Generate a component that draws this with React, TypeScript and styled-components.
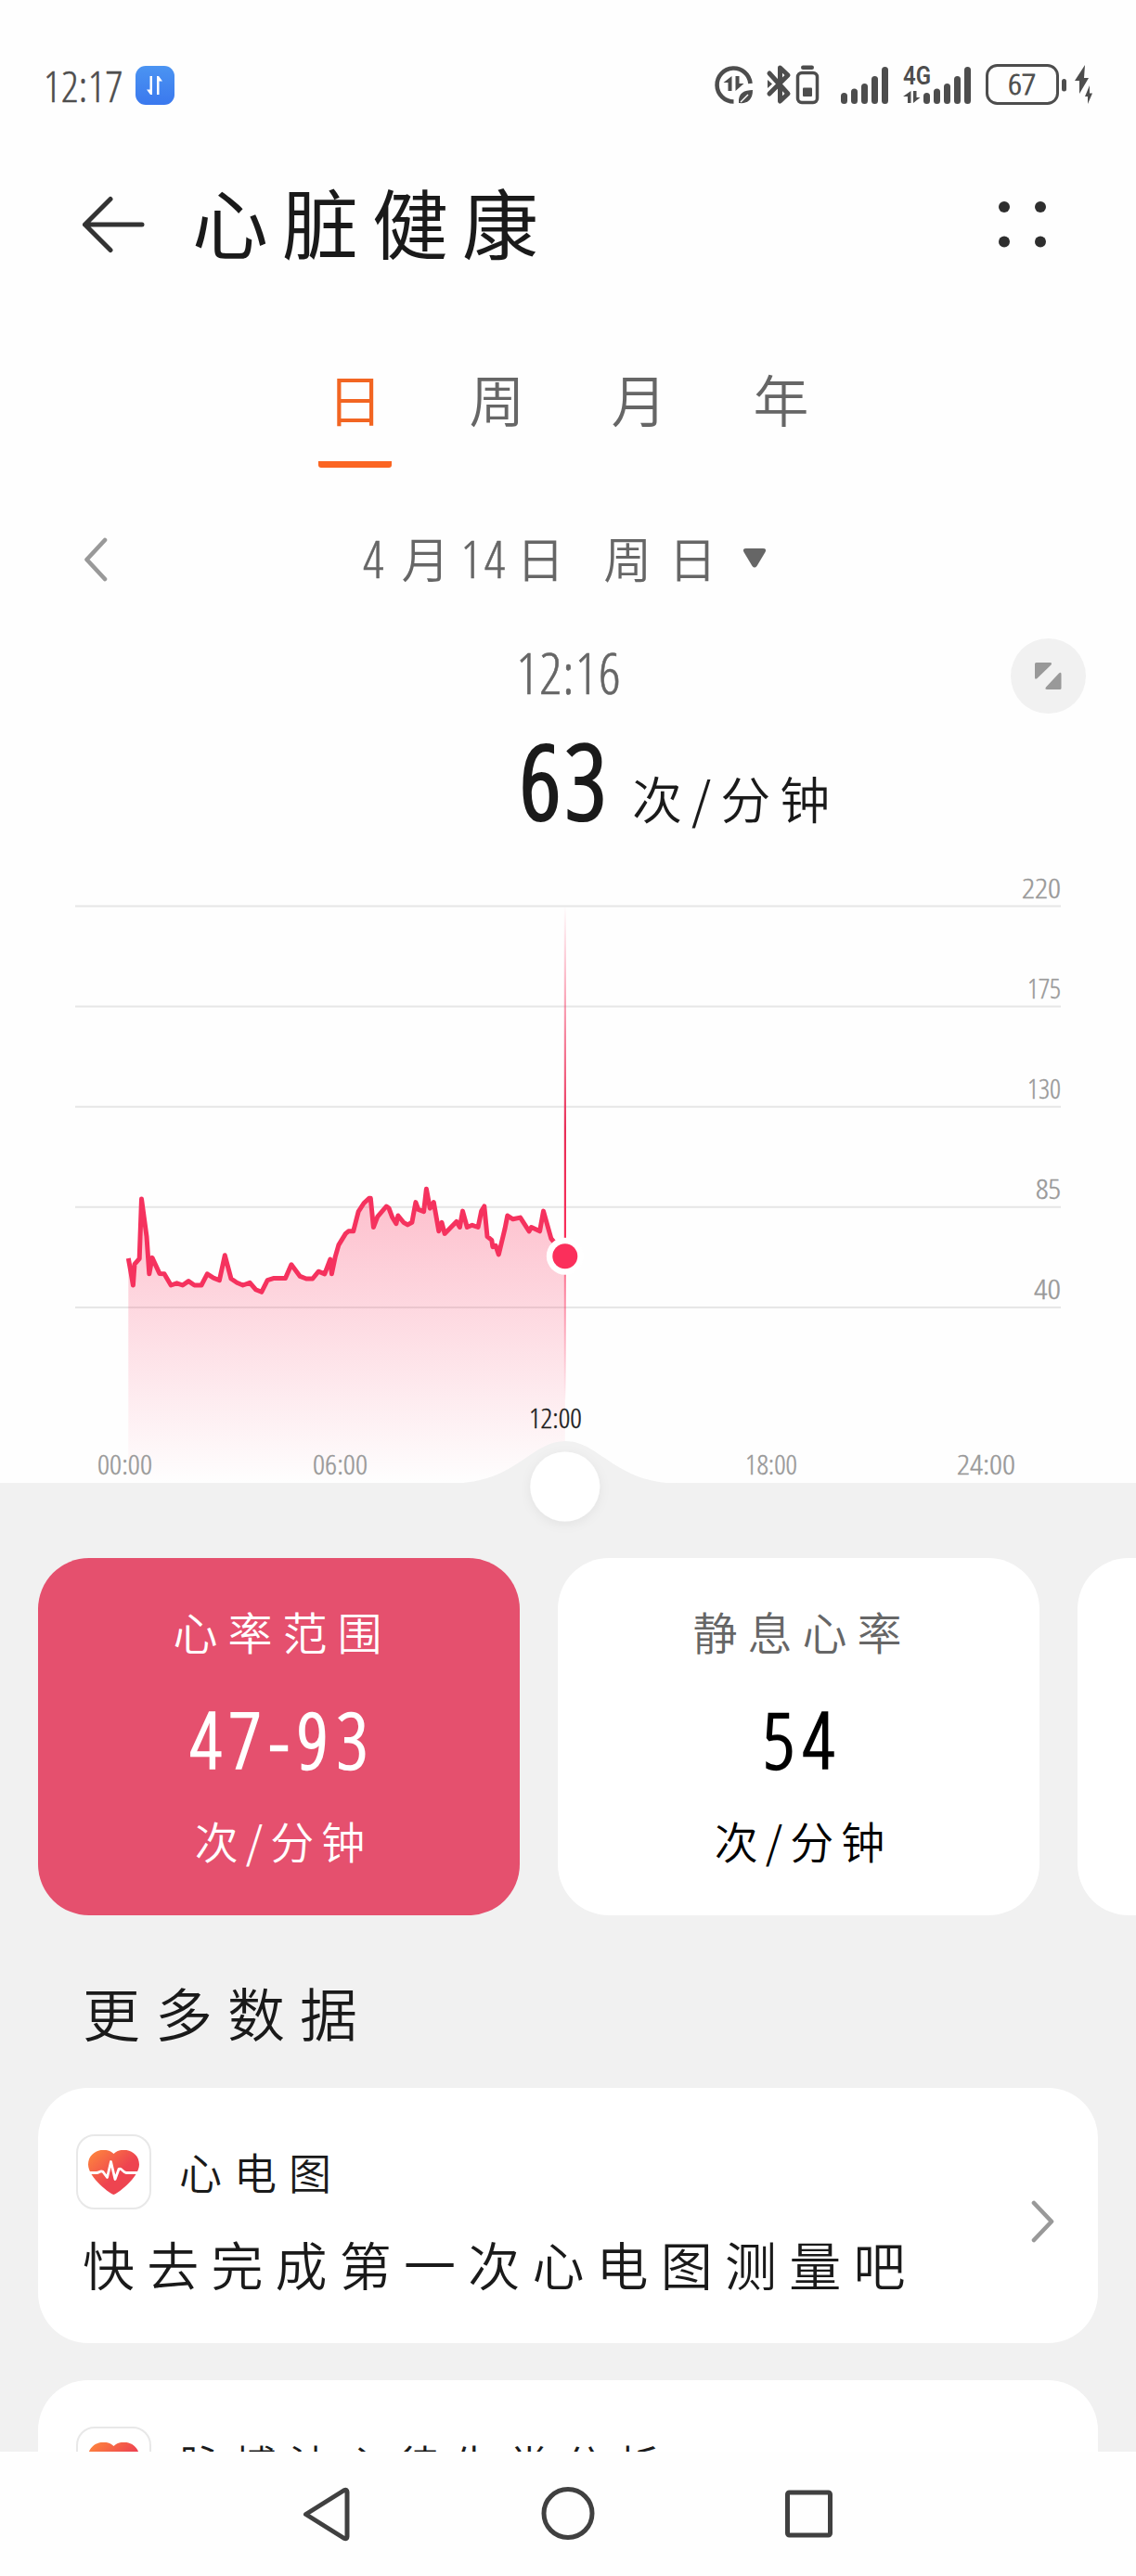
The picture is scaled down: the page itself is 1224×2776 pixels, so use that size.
import React from "react";
import styled, { createGlobalStyle } from "styled-components";

const CJK = `"Noto Sans CJK SC", sans-serif`;
const NUM = `"Open Sans Condensed Light", "Roboto Condensed", Roboto, "Noto Sans CJK SC", sans-serif`;

const GlobalStyle = createGlobalStyle`
  * { box-sizing: border-box; }
  body { margin: 0; background: #fefefe; font-family: ${CJK}; font-weight: 350; color: #1a1a1a; }
`;

const Screen = styled.div`
  width: 1224px;
  height: 2776px;
  overflow: hidden;
  display: flex;
  flex-direction: column;
  background: #fefefe;
`;

const StatusBar = styled.div`
  height: 184px;
  flex: none;
  padding: 0 46px 0 47px;
  display: flex;
  align-items: center;
  justify-content: space-between;
`;

const StatusLeft = styled.div`
  display: flex;
  align-items: center;
  gap: 13px;
`;

const Num = styled.span<{ $size: number; $track?: number; $color?: string; $stroke?: number; $lift?: number }>`
  font-family: ${NUM};
  font-stretch: 75%;
  font-size: ${(p) => p.$size}px;
  letter-spacing: ${(p) => p.$track ?? 0}px;
  color: ${(p) => p.$color ?? "inherit"};
  font-weight: 300;
  -webkit-text-stroke: ${(p) => p.$stroke ?? 0.6}px currentColor;
  line-height: 1;
  margin-bottom: ${(p) => p.$lift ?? 0}px;
  white-space: nowrap;
`;

const StatusIcons = styled.svg`
  width: 410px;
  height: 48px;
  overflow: visible;
`;

const Header = styled.header`
  height: 116px;
  flex: none;
  padding: 0 97px 0 88px;
  display: flex;
  align-items: center;
`;

const Title = styled.h1`
  margin: -8px 0 0 51px;
  flex: 1;
  font-size: 82px;
  font-weight: 400;
  line-height: 116px;
  letter-spacing: 15px;
`;

const Tabs = styled.nav`
  margin-top: 66px;
  height: 138px;
  flex: none;
  display: flex;
  justify-content: center;
  gap: 74px;
`;

const Tab = styled.div<{ $active?: boolean }>`
  width: 79px;
  height: 138px;
  text-align: center;
  font-size: 60px;
  line-height: 126px;
  color: ${(p) => (p.$active ? "#f26522" : "#666")};
  border-bottom: 7px solid ${(p) => (p.$active ? "#fb6522" : "transparent")};
  border-radius: 3px;
`;

const DateRow = styled.div`
  margin-top: 59px;
  height: 80px;
  flex: none;
  padding: 0 90px;
  display: grid;
  grid-template-columns: 26px 1fr 26px;
  align-items: center;
`;

const DateLabel = styled.div`
  display: flex;
  align-items: baseline;
  justify-content: flex-start;
  margin-top: -4px;
  padding-left: 275px;
  font-size: 52px;
  line-height: 76px;
  color: #666;

  svg { align-self: center; }
`;

const Cjk = styled.span<{ $gap: number; $before: number; $after: number }>`
  letter-spacing: ${(p) => p.$gap}px;
  margin-left: ${(p) => p.$before}px;
  margin-right: ${(p) => p.$after - p.$gap}px;
`;

const TimeRow = styled.div`
  margin-top: 45px;
  height: 80px;
  flex: none;
  padding: 0 54px 0 137px;
  display: grid;
  grid-template-columns: 1fr 81px;
  align-items: center;
  text-align: center;
`;

const Reading = styled.div`
  height: 152px;
  flex: none;
  padding: 17px 0 0 560px;
  display: flex;
  align-items: baseline;
  gap: 23px;
`;

const Unit = styled.span<{ $size: number; $track: number }>`
  font-size: ${(p) => p.$size}px;
  letter-spacing: ${(p) => p.$track}px;
  white-space: nowrap;
`;

const Chart = styled.svg`
  display: block;
  flex: none;
  width: 1224px;
  height: 678px;
  overflow: visible;
  position: relative;
  z-index: 1;
  font-family: ${NUM};
  font-weight: 300;
  font-stretch: 75%;
`;

const Lower = styled.main`
  height: 1044px;
  flex: none;
  overflow: hidden;
  background: #f1f1f1;
  padding: 81px 41px 0;
`;

const Stats = styled.div`
  display: flex;
  gap: 41px;
`;

const StatCard = styled.section<{ $active?: boolean }>`
  flex: none;
  width: 519px;
  height: 385px;
  border-radius: 55px;
  display: flex;
  flex-direction: column;
  align-items: center;
  background: ${(p) => (p.$active ? "#e5506e" : "#fff")};
  color: ${(p) => (p.$active ? "#fff" : "#000")};
`;

const StatName = styled.div<{ $active?: boolean }>`
  margin-top: 46px;
  height: 64px;
  font-size: 48px;
  line-height: 64px;
  letter-spacing: 11px;
  padding-left: 8px;
  color: ${(p) => (p.$active ? "#fff" : "#666")};
`;

const StatValue = styled.div`
  height: 110px;
  margin-top: 30px;
  padding-left: 9px;
  display: flex;
  align-items: center;
`;

const StatUnit = styled.div`
  margin-top: 19px;
  line-height: 70px;
  padding-left: 10px;
`;

const SectionTitle = styled.h2`
  margin: 59px 0 0 48px;
  height: 93px;
  font-size: 62px;
  font-weight: 350;
  line-height: 90px;
  letter-spacing: 16px;
`;

const DataCard = styled.section`
  height: 275px;
  margin: 34px 0 40px;
  border-radius: 54px;
  background: #fff;
  padding: 50px 47px 0 41px;
  display: grid;
  grid-template-columns: 1fr 26px;

  & + & {
    margin-top: 0;
  }
`;

const CardHead = styled.div`
  display: flex;
  align-items: center;
  gap: 30px;
  height: 81px;
`;

const IconBox = styled.div`
  width: 81px;
  height: 81px;
  border: 2px solid #e8e8e8;
  border-radius: 20px;
  display: flex;
  align-items: center;
  justify-content: center;
`;

const CardName = styled.div`
  margin-top: -3px;
  font-size: 46px;
  line-height: 80px;
  letter-spacing: 13px;
  white-space: nowrap;
`;

const CardText = styled.div`
  margin: 18px 0 0 7px;
  font-size: 56px;
  line-height: 80px;
  letter-spacing: 13.200px;
  white-space: nowrap;
`;

const ChevronCell = styled.div`
  display: flex;
  align-items: flex-start;
  padding-top: 70px;
`;

const NavBar = styled.footer`
  height: 134px;
  flex: none;
  padding: 38px 326px 0;
  display: flex;
  justify-content: space-between;
`;

const samples: [number, number][] = [
  [138.3, 436], [140.3, 447], [143.4, 465], [145, 442.4], [150.2, 436.3], [152.5, 372], [158, 412.5], [160.8, 452.8],
  [164, 435.4], [171.9, 452.4], [177, 452.8], [184.2, 465], [190.5, 462.8], [196.8, 465], [203.1, 460.6], [209.5, 465],
  [217, 465], [223.3, 452.8], [230, 457.1], [236.4, 459.7], [242.3, 432.8], [249, 458], [255.3, 462.3], [261.7, 465],
  [269.2, 462.3], [275.5, 469.7], [281.8, 472.3], [288.2, 459.7], [294.5, 457.6], [307.5, 457.6], [313.9, 442.8],
  [323.3, 455.4], [330, 458], [336.8, 458], [343.1, 450.2], [349.8, 452.8], [355.8, 437.2], [357.4, 452.8], [361.3, 434.1],
  [364.9, 421.6], [372.4, 409.4], [375.5, 406.8], [380.7, 406.8], [386.2, 385.6], [392.1, 376.5], [397.7, 371.3],
  [399.3, 371.3], [402.4, 402.5], [406.8, 391.2], [416.3, 380], [419, 382], [422.6, 391.6], [426.9, 398.6], [428.9, 390],
  [434.8, 397.3], [439.2, 399.9], [443.9, 397.3], [447.9, 375.6], [450.7, 383.4], [456.6, 385.6], [459.4, 361.3],
  [463.3, 382.1], [467.3, 375.6], [472.8, 406.8], [476, 397.3], [479.1, 409.4], [491.8, 396.4], [495.4, 402.5],
  [498.5, 385.1], [503.3, 402.5], [508.8, 400.3], [515.1, 402.5], [518.7, 385.1], [521.8, 380], [525, 412.5],
  [529.8, 416.4], [530.9, 423.7], [534.1, 422.4], [537.3, 432], [544, 404.2], [546.8, 390], [552.7, 393.8],
  [560.6, 392.1], [570.1, 406.8], [572.5, 402.5], [581.6, 406.8], [585.5, 385.1], [593.8, 414.6], [608.8, 433.7],
];
const linePath = "M" + samples.map((p) => p.join(" ")).join("L");
const areaPath = linePath + "V678H138.3Z";

const yTicks: [number, number][] = [[220, 42], [175, 36], [130, 36], [85, 27], [40, 29]];
const xTicks: [string, number, number, number][] = [
  ["00:00", 105, 669, 59],
  ["06:00", 337, 669, 59],
  ["18:00", 803, 669, 56],
  ["24:00", 1031, 669, 63],
];

const HeartRateChart = () => (
  <Chart viewBox="0 0 1224 678">
    <defs>
      <linearGradient id="area" gradientUnits="userSpaceOnUse" x1="0" y1="360" x2="0" y2="678">
        <stop offset="0" stopColor="#fb2f5b" stopOpacity=".31" />
        <stop offset="1" stopColor="#fb2f5b" stopOpacity="0" />
      </linearGradient>
      <linearGradient id="cursor" gradientUnits="userSpaceOnUse" x1="0" y1="56" x2="0" y2="590">
        <stop offset="0" stopColor="#fb2f5b" stopOpacity="0" />
        <stop offset=".45" stopColor="#e82f58" />
        <stop offset=".7" stopColor="#fb2f5b" />
        <stop offset=".75" stopColor="#fb2f5b" stopOpacity=".55" />
        <stop offset="1" stopColor="#fb2f5b" stopOpacity="0" />
      </linearGradient>
      <filter id="soft" x="-30%" y="-30%" width="160%" height="160%">
        <feDropShadow dx="0" dy="3" stdDeviation="6" floodOpacity=".06" />
      </filter>
    </defs>
    {yTicks.map(([v, w], i) => (
      <g key={v}>
        <rect x="81" y={55.5 + i * 108.1} width="1062" height="2" fill="#e6e6e6" />
        <text x={1143 - w} y={48 + i * 108.1} textLength={w} lengthAdjust="spacingAndGlyphs" fontSize="30" fill="#999" stroke="#999" strokeWidth=".4">{v}</text>
      </g>
    ))}
    <path d={areaPath} fill="url(#area)" />
    <path d={linePath} fill="none" stroke="#f5325e" strokeWidth="5" strokeLinejoin="round" />
    <rect x="607.8" y="56" width="2.2" height="534" fill="url(#cursor)" />
    <circle cx="608.8" cy="433.7" r="20" fill="#fff" />
    <circle cx="608.8" cy="433.7" r="13.5" fill="#fb2f5b" />
    {xTicks.map(([t, x, y, w]) => (
      <text key={t} x={x} y={y} textLength={w} lengthAdjust="spacingAndGlyphs" fontSize="30" fill="#999" stroke="#999" strokeWidth=".4">{t}</text>
    ))}
    <text x="570" y="619" textLength="57" lengthAdjust="spacingAndGlyphs" fontSize="30" fill="#1a1a1a" stroke="#1a1a1a" strokeWidth=".4">12:00</text>
    <path d="M487 678.5C555 678.5 572 633 609 633S663 678.5 731 678.5V740H487Z" fill="#f1f1f1" />
    <circle cx="608.8" cy="682" r="37.5" fill="#fff" filter="url(#soft)" />
  </Chart>
);

const bars = (x: number) =>
  [12, 16.5, 22, 30, 40].map((h, i) => (
    <rect key={i} x={x + i * 11} y={44 - h} width="7" height={h} rx="3.5" />
  ));

const SystemIcons = () => (
  <StatusIcons viewBox="768 68 410 48" fill="#4d4d4d">
    <g transform="translate(0 68)">
      <path d="M808.5 22A18 18 0 1 0 790.5 41.5" fill="none" stroke="#4d4d4d" strokeWidth="4.6" />
      <path d="M788.5 14v16h-4V21h-5zM792.5 30V14h4v8h5z" />
      <path d="M811 29c-9 0-16 3-15 14c9 1 15-3 15-14z" />
      <path d="M798 42l8-8" stroke="#fefefe" strokeWidth="1.5" />
      <path d="M829 11l20 22-8.5 8V5l8.5 8-20 20" fill="none" stroke="#4d4d4d" strokeWidth="5" strokeLinejoin="round" strokeLinecap="round" />
      <path d="M827 18v9l5-4.5z" />
      <rect x="859.5" y="10.5" width="21" height="32" rx="4.5" fill="none" stroke="#4d4d4d" strokeWidth="3.5" />
      <rect x="863" y="2.5" width="14" height="4.5" rx="2.2" />
      <rect x="865" y="26.5" width="10" height="9.5" rx="1" />
      {bars(906)}
      <text x="973" y="23" fontFamily="Roboto, sans-serif" fontWeight="600" fontSize="27" textLength="30" lengthAdjust="spacingAndGlyphs">4G</text>
      <path d="M981.5 30v13h-3.5v-7h-5zM984 43V30h3.5v7h4z" />
      {bars(995)}
      <rect x="1063.5" y="2.5" width="76" height="41" rx="11" fill="none" stroke="#4d4d4d" strokeWidth="3" />
      <rect x="1144" y="17" width="5" height="13.5" rx="2.5" />
      <text x="1086" y="34" fontFamily={NUM} fontSize="32" fontWeight="300" stroke="#4d4d4d" strokeWidth=".8" textLength="30" lengthAdjust="spacingAndGlyphs">67</text>
      <path d="M1169 2l-11 17h5v14l10-17h-5z" />
      <path d="M1174 24l-5 12h3v8l5-11.5h-3z" />
    </g>
  </StatusIcons>
);

const Heart = ({ id }: { id: string }) => (
  <svg width="55" height="48" viewBox="0 0 55 48">
    <defs>
      <linearGradient id={id} x1="0" y1="0" x2=".7" y2=".7">
        <stop offset="0" stopColor="#ff8a3c" />
        <stop offset=".8" stopColor="#ee4450" />
      </linearGradient>
    </defs>
    <path d="M27.5 48C25 48 0 30 0 15.5C0 1 18-5 27.5 4C37-5 55 1 55 15.5C55 30 30 48 27.5 48Z" fill={`url(#${id})`} />
    <path d="M2 24.5h7c3.5 0 4-3 7-1l4.5 6 4-17 4.5 19 4-11c3-2 4 3.5 8 4h12" fill="none" stroke="#fff" strokeWidth="2.8" strokeLinejoin="round" />
  </svg>
);

const Chevron = ({ left }: { left?: boolean }) => (
  <svg width="26" height="48" viewBox="0 0 26 48" fill="none" stroke="#999" strokeWidth="4.6" strokeLinecap="round" strokeLinejoin="round">
    <path d={left ? "M23 3L3.5 24L23 45" : "M4 4L23 24L4 44"} />
  </svg>
);

const Metric = ({ name, value, active }: { name: string; value: string; active?: boolean }) => (
  <StatCard $active={active}>
    <StatName $active={active}>{name}</StatName>
    <StatValue>
      <Num $size={84} $track={9} $stroke={2.4}>{value}</Num>
    </StatValue>
    <StatUnit>
      <Unit $size={47} $track={8}>次/分钟</Unit>
    </StatUnit>
  </StatCard>
);

export default function App() {
  return (
    <>
      <GlobalStyle />
      <Screen>
        <StatusBar>
          <StatusLeft>
            <Num $size={46} $color="#4d4d4d" $track={0.5} $stroke={0.5}>12:17</Num>
            <svg width="42" height="42" viewBox="0 0 42 42">
              <defs>
                <linearGradient id="badge" x1="0" y1="0" x2="0" y2="1">
                  <stop offset="0" stopColor="#4b94f2" />
                  <stop offset="1" stopColor="#3a78ee" />
                </linearGradient>
              </defs>
              <rect width="42" height="42" rx="11" fill="url(#badge)" />
              <path d="M18 11v20h-2l-4-5.5h3.5V11zM23 31V11h2l4 5.5h-3.5V31z" fill="#fff" />
            </svg>
          </StatusLeft>
          <SystemIcons />
        </StatusBar>
        <Header>
          <svg width="68" height="62" viewBox="0 0 68 62" fill="none" stroke="#333" strokeWidth="5" strokeLinecap="round" strokeLinejoin="round">
            <path d="M31 3.5L3.5 31L31 58.5M3.5 31H65" />
          </svg>
          <Title>心脏健康</Title>
          <svg width="51" height="50" viewBox="0 0 51 50" fill="#2e2e2e">
            <circle cx="6" cy="6" r="6" />
            <circle cx="45" cy="6" r="6" />
            <circle cx="6" cy="43.5" r="6" />
            <circle cx="45" cy="43.5" r="6" />
          </svg>
        </Header>
        <Tabs>
          <Tab $active>日</Tab>
          <Tab>周</Tab>
          <Tab>月</Tab>
          <Tab>年</Tab>
        </Tabs>
        <DateRow>
          <Chevron left />
          <DateLabel>
            <Num $size={56} $track={3}>4</Num>
            <Cjk $gap={0} $before={16} $after={12}>月</Cjk>
            <Num $size={56} $track={3}>14</Num>
            <Cjk $gap={0} $before={9} $after={40}>日</Cjk>
            <Cjk $gap={18} $before={2} $after={29}>周日</Cjk>
            <svg width="24" height="21" viewBox="0 0 24 21" fill="#666">
              <path d="M3 0h18q4.5 0 2.5 4L14.5 19q-2.5 3-5 0L.5 4Q-1.5 0 3 0Z" />
            </svg>
          </DateLabel>
        </DateRow>
        <TimeRow>
          <Num $size={60} $color="#666" $lift={8} $track={1}>12:16</Num>
          <svg width="81" height="81" viewBox="0 0 81 81">
            <circle cx="40.5" cy="40.5" r="40.5" fill="#f1f1f1" />
            <path d="M27.5 26h15q2.5 0 1 2.5L28.5 43q-2.5 2-2.5-1V27.5q0-1.5 1.5-1.5zM53 55H39q-2.5 0-1-2.5L52 37.5q2.5-2 2.5 1v15q0 1.5-1.5 1.5z" fill="#999" />
          </svg>
        </TimeRow>
        <Reading>
          <Num $size={110} $track={5} $stroke={4}>63</Num>
          <Unit $size={54} $track={10}>次/分钟</Unit>
        </Reading>
        <HeartRateChart />
        <Lower>
          <Stats>
            <Metric active name="心率范围" value="47-93" />
            <Metric name="静息心率" value="54" />
            <StatCard />
          </Stats>
          <SectionTitle>更多数据</SectionTitle>
          <DataCard>
            <div>
              <CardHead>
                <IconBox><Heart id="heart1" /></IconBox>
                <CardName>心电图</CardName>
              </CardHead>
              <CardText>快去完成第一次心电图测量吧</CardText>
            </div>
            <ChevronCell><Chevron /></ChevronCell>
          </DataCard>
          <DataCard>
            <CardHead>
              <IconBox><Heart id="heart2" /></IconBox>
              <CardName>脉搏波心律失常分析</CardName>
            </CardHead>
          </DataCard>
        </Lower>
        <NavBar>
          <svg width="52" height="60" viewBox="0 0 52 60" fill="none" stroke="#404040" strokeWidth="5" strokeLinejoin="round">
            <path d="M3.5 29.5L45 3.5Q48 2.5 48 5.5V53.5Q48 56.5 45 55.5Z" />
          </svg>
          <svg width="58" height="60" viewBox="0 0 58 60" fill="none" stroke="#404040" strokeWidth="5">
            <circle cx="29" cy="28.5" r="26" />
          </svg>
          <svg width="52" height="60" viewBox="0 0 52 60" fill="none" stroke="#404040" strokeWidth="5">
            <rect x="2.5" y="6" width="46" height="46" rx="2" />
          </svg>
        </NavBar>
      </Screen>
    </>
  );
}
